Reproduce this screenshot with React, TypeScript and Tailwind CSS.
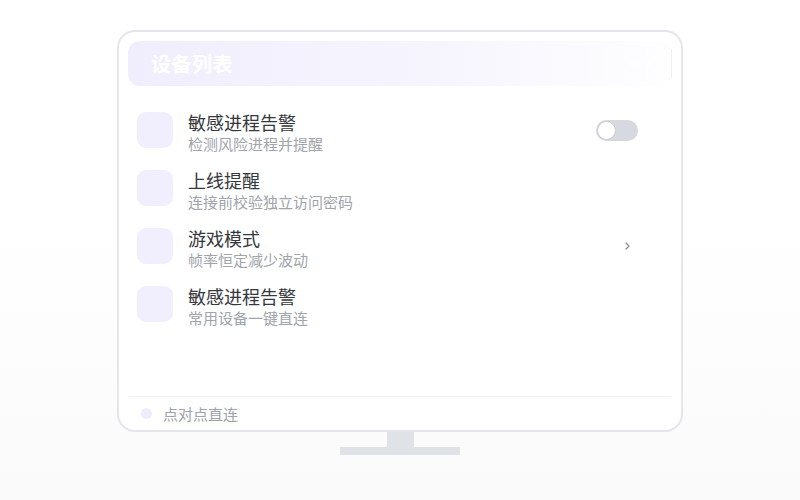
import { useState } from 'react';

type Row = {
  title: string;
  desc: string;
  action?: 'toggle' | 'chevron';
};

const ROWS: Row[] = [
  { title: '敏感进程告警', desc: '检测风险进程并提醒', action: 'toggle' },
  { title: '上线提醒', desc: '连接前校验独立访问密码' },
  { title: '游戏模式', desc: '帧率恒定减少波动', action: 'chevron' },
  { title: '敏感进程告警', desc: '常用设备一键直连' },
];

function Toggle() {
  const [on, setOn] = useState(false);
  return (
    <button
      onClick={() => setOn(!on)}
      className={`relative w-[42px] h-[21px] rounded-full shrink-0 ${on ? 'bg-[#b9b1f5]' : 'bg-[#d6d9df]'}`}
    >
      <span
        className={`absolute top-[1px] w-[19px] h-[19px] rounded-full bg-white border border-[#c9ccd3] ${on ? 'left-[22px]' : 'left-[1px]'}`}
      />
    </button>
  );
}

function Chevron() {
  return (
    <svg width="7" height="10" viewBox="0 0 7 10" className="shrink-0 mr-[7px]">
      <path d="M2 2 L5 5 L2 8" fill="none" stroke="#8a8f99" strokeWidth="1.4" strokeLinecap="round" strokeLinejoin="round" />
    </svg>
  );
}

export default function App() {
  return (
    <div
      className="w-[800px] h-[500px] bg-gradient-to-b from-white from-45% to-[#fafafb] flex flex-col items-center pt-[30px]"
      style={{ fontFamily: '"Noto Sans CJK SC", "Noto Sans", sans-serif' }}
    >
      {/* screen */}
      <div className="w-[566px] h-[402px] border-2 border-[#e4e6eb] rounded-[18px] bg-white flex flex-col px-[9px] pt-[9px]">
        <div className="h-[45px] rounded-[12px] bg-gradient-to-r from-[#f0eefd] via-[#f6f5fe] via-55% to-[#fefeff] flex items-center pl-[23px] pr-0">
          <span className="text-white text-[20px] font-bold tracking-[0.5px] leading-none">设备列表</span>
          <div className="flex-1" />
          <div className="flex items-center gap-[4px] mr-[20px] opacity-60">
            <span className="w-[5px] h-[5px] rounded-full bg-white" />
            <span className="w-[5px] h-[5px] rounded-full bg-white" />
            <span className="w-[5px] h-[5px] rounded-full bg-white" />
          </div>
          <div className="w-px h-[29px] bg-[#eff0f4]" />
        </div>

        <div className="flex flex-col gap-[15px] mt-[25px] pl-[9px] pr-[34px]">
          {ROWS.map((r, i) => (
            <div key={i} className="flex items-start">
              <div className="w-[36px] h-[36px] mt-[1px] rounded-[9px] bg-[#f1effd] shrink-0" />
              <div className="ml-[15px] flex-1">
                <div className="text-[18px] leading-[22px] text-[#36383d]">{r.title}</div>
                <div className="text-[15px] leading-[21px] text-[#a0a4ab]">{r.desc}</div>
              </div>
              {r.action === 'toggle' && (
                <div className="h-[38px] flex items-center">
                  <Toggle />
                </div>
              )}
              {r.action === 'chevron' && (
                <div className="h-[38px] flex items-center">
                  <Chevron />
                </div>
              )}
            </div>
          ))}
        </div>

        <div className="flex-1" />

        <div className="h-px bg-[#eef0f3] mx-[1px]" />
        <div className="h-[33px] flex items-center pl-[13px] gap-[11px]">
          <span className="w-[11px] h-[11px] rounded-full bg-[#efedfd]" />
          <span className="text-[15px] leading-none text-[#9ea2aa]">点对点直连</span>
        </div>
      </div>

      {/* stand */}
      <div className="w-[27px] h-[15px] bg-[#dfe2e6]" />
      <div className="w-[120px] h-[8px] bg-[#dfe2e6]" />
    </div>
  );
}
